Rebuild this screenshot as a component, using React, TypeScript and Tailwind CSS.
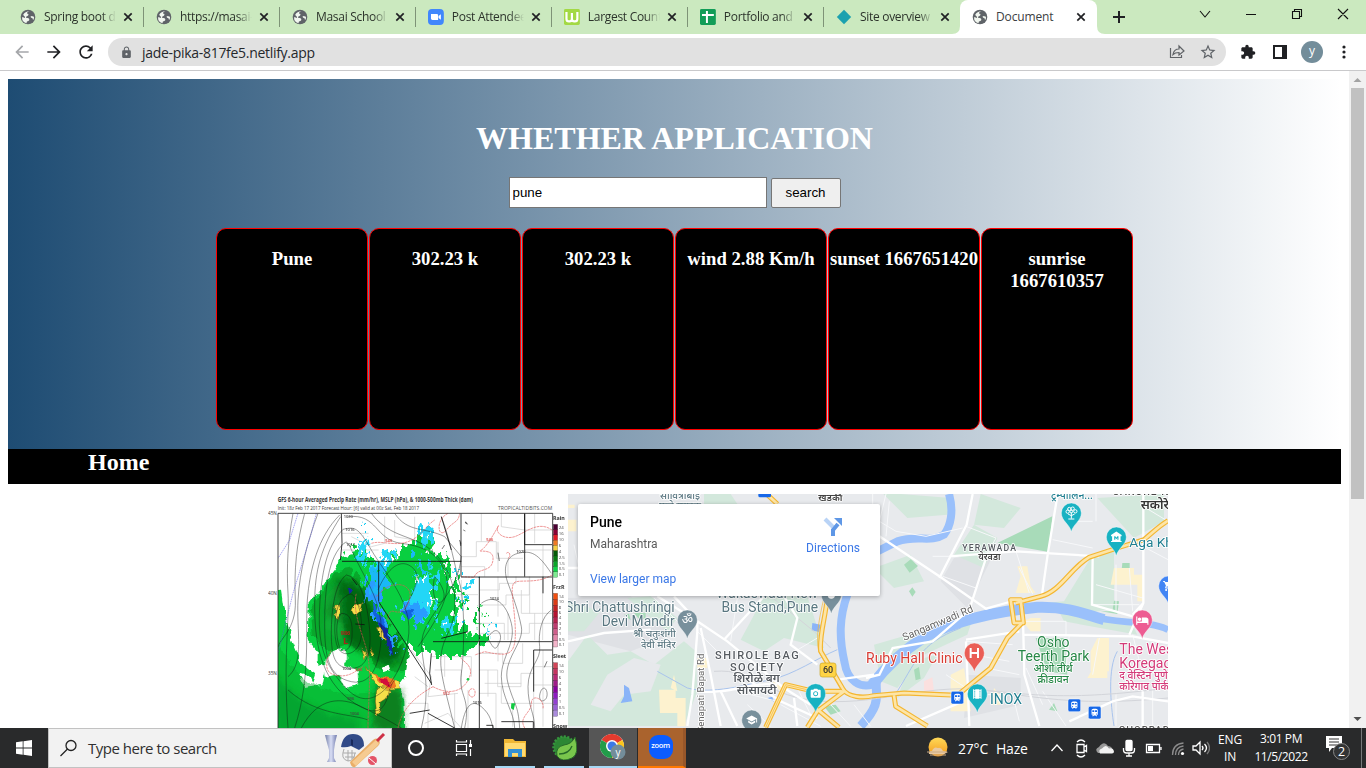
import React from 'react';
import {
  MdLock, MdArrowBack, MdArrowForward, MdRefresh, MdStarBorder, MdExtension,
  MdTrain, MdHotel, MdShoppingCart, MdMuseum, MdSchool, MdNature, MdCameraAlt, MdTheaters,
} from 'react-icons/md';

const Sheet = () => (
  <svg width="16" height="16" viewBox="0 0 16 16"><rect width="16" height="16" rx="1.5" fill="#129d57" /><path d="M6 2h2v3h6v2H8v7H6V7H2V5h4z" fill="#fff" /></svg>
);
const ZoomFav = () => (
  <svg width="16" height="16" viewBox="0 0 16 16"><rect width="16" height="16" rx="4" fill="#4087fc" /><path d="M3 5h6q1.200 0 1.200 1.200V11H4.500Q3 11 3 9.500zM10.700 7 13 5.200v5.500L10.700 9z" fill="#fff" /></svg>
);
const WFav = () => (
  <svg width="16" height="16" viewBox="0 0 16 16"><rect width="16" height="16" rx="1.500" fill="#a3d944" /><path d="M2.500 3v7q0 2.500 2.500 2.500h.5Q8 12.500 8 10V4v6q0 2.500 2.500 2.500h.5q2.500 0 2.500-2.500V3" fill="none" stroke="#fff" strokeWidth="2.200" /></svg>
);
const Diamond = () => (
  <svg width="16" height="16" viewBox="0 0 16 16"><path d="M8 .8 15.200 8 8 15.200.8 8z" fill="#1ba1af" /></svg>
);
const Globe = () => (
  <svg className="shrink-0" width="16" height="16" viewBox="0 0 16 16">
    <circle cx="8" cy="8" r="7.300" fill="#5f6368" />
    <path d="M9.500 2.200Q7 2.800 7 4q0 1 1.500 1 0 2-1.500 2.200-1.200.2-1 1.500 2 0 2.500.6 1.200.4.700 1.900-.5 1-2.200 1.300-.6.800-.3 1.800Q2 13.500 2 8.300q1.500-.2 3 .7Q5.500 7.500 4 7l-.8-1.200Q5 2.200 9.500 2.200M10.500 7.500q1.500-1 2.500 0l1 .3q.2 2-.8 3.200-.7-.8-.8-1.900-1.600.1-1.900-1.600" fill="#f1f6ef" />
  </svg>
);
const Close = () => (
  <svg className="shrink-0" width="10" height="10"><path d="M1.300 1.300l7.400 7.400M8.700 1.300 1.300 8.700" stroke="#202124" strokeWidth="1.700" /></svg>
);

const tabs = [
  { title: 'Spring boot de', icon: <Globe /> },
  { title: 'https://masai-s', icon: <Globe /> },
  { title: 'Masai School', icon: <Globe /> },
  { title: 'Post Attendee', icon: <ZoomFav /> },
  { title: 'Largest Countr', icon: <WFav /> },
  { title: 'Portfolio and a', icon: <Sheet /> },
  { title: 'Site overview', icon: <Diamond /> },
];

function TabStrip() {
  return (
    <div className="flex h-[34px] bg-[#cbe9bf] text-[12px] tracking-[-0.3px] text-[#2c332b]">
      <div className="flex pl-2">
        {tabs.map((t, i) => (
          <div key={i} className="flex w-[136px] items-center pl-3">
            {t.icon}
            <div className="ml-2 w-[73px] overflow-hidden whitespace-nowrap [mask-image:linear-gradient(to_right,black_80%,transparent)]">{t.title}</div>
            <div className="ml-[7px] flex"><Close /></div>
            <div className={i < 6 ? 'ml-[10px] h-5 w-px bg-[#7e9377]' : ''} />
          </div>
        ))}
      </div>
      <div className="relative flex w-[137px] items-center rounded-t-lg bg-white pl-3">
        <svg className="absolute bottom-0 -left-2" width="8" height="8"><path d="M8 0v8H0Q8 8 8 0" fill="#fff" /></svg>
        <svg className="absolute -right-2 bottom-0" width="8" height="8"><path d="M0 0v8h8Q0 8 0 0" fill="#fff" /></svg>
        <Globe />
        <div className="ml-2 w-[73px] tracking-[-0.15px] text-[#3c4043]">Document</div>
        <div className="ml-[7px]"><Close /></div>
      </div>
      <div className="flex w-11 items-center justify-center"><svg width="12" height="12"><path d="M6 0v12M0 6h12" stroke="#202124" strokeWidth="2" /></svg></div>
      <svg className="ml-[40px]" width="185" height="34" fill="none" stroke="#111" strokeWidth="1.100">
        <path d="m19 11 5 6 5-6M65 14.500h10M111.500 11.500h7v7h-7zM113.500 11.500v-2h7v7h-2M157 9l10 10M167 9l-10 10" />
      </svg>
    </div>
  );
}

function Toolbar() {
  return (
    <div className="flex h-[37px] items-center border-b border-[#c9c9cb] bg-white pl-3">
      <MdArrowBack size={20} color="#a5a7aa" />
      <MdArrowForward className="ml-3" size={20} color="#202124" />
      <MdRefresh className="ml-3" size={20} color="#202124" />
      <div className="ml-3 flex h-7 w-[1118px] items-center rounded-full bg-[#e1e1e1] pl-3">
        <MdLock size={13} color="#5f6368" />
        <span className="ml-[9px] text-[14px] tracking-[-0.3px] text-[#25282c]">jade-pika-817fe5.netlify.app</span>
        <svg className="ml-auto" width="18" height="18" fill="none" stroke="#606367" strokeWidth="1.200">
          <path d="M2.500 5v9.500h11V12M5 11.500q1-5.500 6-5.500V3l5 5-5 4V9.500q-4 0-6 2z" />
        </svg>
        <MdStarBorder className="mr-[9px] ml-[13px]" size={18} color="#5f6368" />
      </div>
      <MdExtension className="ml-[14px]" size={16} color="#202124" />
      <svg className="ml-[17px]" width="14" height="14"><path fillRule="evenodd" d="M0 0h14v14H0zM2 2v10h7V2z" fill="#202124" /></svg>
      <div className="ml-[14px] flex size-[22px] items-center justify-center rounded-full bg-[#738d9a] pb-[2px] text-[12px] text-white">y</div>
      <svg className="ml-[19px]" width="4" height="14" fill="#202124"><circle cx="2" cy="2" r="1.600" /><circle cx="2" cy="7" r="1.600" /><circle cx="2" cy="12" r="1.600" /></svg>
    </div>
  );
}

const cards = ['Pune', '302.23 k', '302.23 k', 'wind 2.88 Km/h', 'sunset 1667651420', 'sunrise 1667610357'];

const legends = [
  { y: 103, h: 158, name: 'Rain', ny: 91, colors: ['#4c0033', '#8b0036', '#e21b27', '#ef7a24', '#f4ce40', '#055b08', '#087b12', '#09a629', '#0cd744', '#7dea90'], ticks: ['24', '16', '10', '6', '4', '2.5', '1.5', '0.5', '0.1'] },
  { y: 310, h: 160, name: 'FrzR', ny: 298, colors: ['#f34f0f', '#dc3c16', '#c52222', '#b71230', '#b6204d', '#bf3c70', '#d05e8b', '#e487aa', '#f3b4c9'], ticks: ['14', '10', '8', '6', '4', '3', '2', '1', '0.5', '0.1'] },
  { y: 518, h: 160, name: 'Sleet', ny: 505, colors: ['#d44558', '#c5345f', '#b82975', '#a01e89', '#8900a0', '#8e1bc2', '#9340d2', '#9a60d7', '#aa8bdd'], ticks: ['14', '10', '6', '4', '3', '2', '1', '0.5', '0.1'] },
];

const isobars = [
  'M75 70C60 150 55 230 60 310S45 500 60 714',
  'M110 70C85 160 78 240 82 330S30 450 32 470',
  'M150 70C120 150 95 240 90 330S110 520 60 560',
  'M215 75C150 140 125 240 118 330S130 560 80 714',
  'M218 80C160 170 140 240 140 340S150 570 260 640 350 600 380 570',
  'M225 118C175 170 160 250 155 350S160 520 240 600 400 560 420 450 350 250 310 180 260 110 225 118',
  'M228 160C180 200 170 300 170 400S180 560 250 575 340 500 340 420 300 280 270 220 240 150 228 160',
  'M235 255C200 280 190 360 190 430S200 535 250 535 310 480 305 420 285 265 235 255',
  'M225 325C200 350 195 420 205 460S250 500 270 470 280 360 265 330 240 315 225 325',
  'M220 370C200 390 205 450 215 472S250 480 252 440 250 370 220 370',
  'M240 80C330 70 320 150 400 160S520 200 535 260 500 400 450 470',
  'M310 70C370 150 440 130 500 190S580 350 540 430 520 550 560 714',
  'M380 70C420 130 470 110 530 140L580 200 C570 300 500 350 470 420S500 550 460 714',
  'M520 80C550 160 560 230 575 280S590 480 580 550 610 620 590 714',
  'M100 714C150 620 220 620 280 650S360 690 400 714',
  'M60 600C150 680 250 670 300 690',
  'M640 340C680 310 715 340 730 400S700 500 700 560 740 670 740 714',
  'M850 250C810 190 790 180 750 190S705 240 720 280 750 360 760 410 700 510 720 580 750 640 755 714',
  'M850 360C820 380 810 430 815 470S780 530 780 590 800 670 800 714',
  'M670 430C685 410 705 430 695 455S680 480 668 460 660 440 670 430',
  'M580 714C590 650 610 625 640 650S670 700 675 714',
  'M820 600C835 580 845 620 830 630S810 620 820 600',
  'M330 300C350 250 390 200 430 230S430 310 410 360',
  'M500 260C520 280 540 320 520 335S490 300 500 260',
];

const counties = [
  'M580 200h45v-45h60v50h80M640 70v85M700 70v40l70 10v60h80M770 120h82M690 155v90M580 230h70v30M720 205v55M800 70v90M825 165v95',
  'M634 300h60v-20h50v-20M634 345h80v-30h70v-55M690 260v120M634 400h75v50M760 300v70h92M785 260v110M720 370v80M800 370v80M634 430h150v-30h68M824 260v190',
  'M634 490h70v30h60v-60M634 540h55v50h70v-40h40M634 610h50v104M700 590v50h97M734 640v70M690 454v60M797 480v230M825 480v230M797 530h55M797 585h55M797 640h55M650 580h110M660 540v80',
  'M430 480l60 80-10 60 90-10M490 500h120v60M530 460v100M500 540h80v60M600 600v114M420 640h60v74M470 700l70-30 40 44M560 610v104M440 560l40 30M250 140l60 30 40-10v-80M380 90v50l60 10v-70',
  'M222 130h80M222 180h110M280 214v60l50 20M420 214v70M470 214v60M335 330l160 10M332 275h100l20 60M380 335v60l40 20M540 214v100h90M580 270v80',
];

const redLines = [
  'M310 160C340 150 380 170 420 155S470 110 500 90',
  'M540 70C500 90 510 150 535 120S570 100 575 70',
  'M852 120C810 90 770 130 740 140S680 130 690 110 660 170 640 180 680 170 675 210 630 230 618 262L580 260',
  'M852 255C810 280 770 270 745 275S740 340 742 420 720 500 650 485L620 495',
  'M285 530C260 545 240 565 200 555S180 500 190 480',
  'M495 590C440 620 400 660 390 714M495 590C550 620 590 600 605 560S570 510 580 500M605 600c10-10 20 0 15 15s-25 0-15-15',
  'M300 714C300 640 310 560 300 500S250 370 265 310',
  'M770 714C750 680 790 670 790 640S830 625 825 655M715 190c10-10 15 10 5 15',
  'M325 320C370 260 450 280 420 340S365 330 360 390',
];

function WeatherMap() {
  return (
    <svg className="block h-[234px] w-[300px] shrink-0" viewBox="0 12 900 702" fontFamily="'Open Sans','Noto Sans',sans-serif">
      <defs>
        <filter id="ragged" x="-5%" y="-5%" width="110%" height="110%">
          <feTurbulence type="fractalNoise" baseFrequency=".035" numOctaves="3" seed="4" />
          <feDisplacementMap in="SourceGraphic" scale="30" xChannelSelector="R" yChannelSelector="G" colorInterpolationFilters="sRGB" />
        </filter>
        <filter id="jagged" x="-5%" y="-5%" width="110%" height="110%" colorInterpolationFilters="sRGB">
          <feTurbulence type="fractalNoise" baseFrequency=".05 .03" numOctaves="3" seed="11" />
          <feDisplacementMap in="SourceGraphic" scale="90" xChannelSelector="R" yChannelSelector="G" />
        </filter>
        <filter id="haze"><feGaussianBlur stdDeviation="9" /></filter>
        <clipPath id="plot"><rect x="30" y="70" width="824" height="644" /></clipPath>
      </defs>
      <rect y="12" width="900" height="702" fill="#fff" />
      <text x="29" y="36" fontSize="19" fontWeight="700" fill="#333" textLength="586" lengthAdjust="spacingAndGlyphs">GFS 6-hour Averaged Precip Rate (mm/hr), MSLP (hPa), &amp; 1000-500mb Thick (dam)</text>
      <text x="29" y="59" fontSize="16" fill="#333" textLength="424" lengthAdjust="spacingAndGlyphs">Init: 18z Feb 17 2017   Forecast Hour: [6]   valid at 00z Sat, Feb 18 2017</text>
      <text x="690" y="59" fontSize="18" fill="#555" textLength="163" lengthAdjust="spacingAndGlyphs">TROPICALTIDBITS.COM</text>
      <g fontSize="14" fill="#333"><text x="0" y="75">45N</text><text x="0" y="315">40N</text><text x="0" y="556">35N</text></g>
      <g clipPath="url(#plot)">
        <g fill="none" stroke="#cfcfcf" strokeWidth="2.200">{counties.map((d, i) => <path key={i} d={d} />)}</g>
        <g filter="url(#ragged)">
          <path fill="#09cf40" d="M30 310L48 308 62 400 75 450 110 530 150 560 140 590 105 570 120 600 170 590 180 540 155 520 155 490 125 455 128 350 210 240 225 210 290 195 340 260 440 350 430 440 425 490 420 560 400 590 415 640 418 730 30 730z" />
          <path fill="#09a82c" d="M140 440L135 360 210 250 270 240 310 310 350 350 400 440 430 490 420 550 350 550 300 500 250 470 185 490z" />
          <path fill="#09a82c" d="M30 450q60 150 210 170l160-15 12 125H30z" opacity=".45" />
          <g filter="url(#haze)">
            <path fill="#06600f" d="M215 270L290 295 330 380 400 460 410 520 350 530 290 490 250 470 220 400 180 380z" opacity=".9" />
            <path fill="#09701c" d="M330 590L410 610 410 730 320 730z" opacity=".8" />
            <path fill="#0a8020" d="M30 560q100 130 250 130v60H30z" opacity=".4" />
            <path fill="#19b53c" d="M180 330l40-50 15 110-5 70-50-30z" opacity=".5" />
          </g>
          <path fill="#fff" d="M175 550L180 510 215 480 240 490 240 530 275 545 278 590 240 600 220 560 180 570z" />
        </g>
        <g filter="url(#jagged)">
          <path fill="#09cf40" d="M225 210L290 195 330 225 345 200 430 160 480 130 495 185 530 195 550 245 565 300 575 350 560 380 600 430 645 440 640 475 590 495 520 495 460 480 425 480 380 430 300 300z" />
          <path fill="#23d6f6" d="M460 100l25 5-5 50-28 0zM325 215l45-35 12 30-25 60-20 50-20-45-5-50zM450 260l50-20-5 150-60 20-40-55 35-40zM530 380l40 0-10 50-45 0zM280 140l14 0 5 50-18 30-8-50zM580 275l45-5-35 30z" />
          <path fill="#2a9cff" d="M290 280L350 250 350 310 340 380 370 430 380 480 350 440 320 370zM400 350l60-15 30 50-60 20z" />
          <path fill="#1ab8f5" d="M300 260l40-40 25 10-10 60-35 30zM440 200l35 10 5 35-30 0z" />
          <path fill="#09cf40" d="M350 230l70-30 25 60-35 60-50-10zM420 390l50 20-20 50-35-20zM500 190l40 0 5 60-40 30z" />
          <g fill="#09c93d"><path d="M560 300l20 10-5 30-18-10zM590 320l14 14-10 26-14-15zM610 375l20-10 15 30-15 15zM640 360l12-6-4 20zM245 170l20-10-10 25zM575 410l28 15-15 30-25-15z" /></g>
          <g fill="#fff"><path d="M460 270l8-20 4 20zM490 320l12-10-5 30zM435 290l8-15 2 20zM540 390l12-8-4 26zM580 380l12-12-7 30zM375 190l12-8-4 24zM520 250l7-14 3 20z" /></g>
          <g fill="#0dcaf1"><circle cx="270" cy="190" r="5" /><circle cx="565" cy="240" r="5" /><circle cx="672" cy="405" r="5" /><circle cx="658" cy="435" r="5" /><circle cx="520" cy="225" r="6" /><circle cx="545" cy="275" r="5" /><circle cx="285" cy="110" r="5" /><circle cx="575" cy="330" r="8" /><circle cx="590" cy="350" r="6" /></g>
        </g>
        <g filter="url(#ragged)">
          <path fill="#1262df" d="M405 365l40 5-20 25zM320 340l30 50 30 80-4 35-20-60-30-60z" />
          <path fill="#13269e" d="M335 400l30 25 20 75-18-15-15-50zM250 300l5-4 6 18-8 8z" />
          <path fill="#fff" d="M350 540l16-10 4 20-14 5zM105 560l30 8 10 20-25-4z" />
          <path fill="#f6df49" stroke="#835b18" strokeWidth="1.500" d="M210 355l10-5 4 20-8 24-9-12zM268 350l22-6-4 22-20 18-8-14zM335 418l12 5 12 33-14-12zM288 485l14 18-5 15zM314 482l12 26-12-6zM300 535l18 25 35 15 45 5 5 24-30 2-35-8-24-30zM335 605l30-12 10 20-15 20-15 10 0 25-8 18-6-45z" />
          <path fill="#ef7a24" d="M320 560l65 12 5 28-30 2z" />
          <path fill="#d30e3c" d="M338 568l28 4 10 26-24-3z" />
        </g>
        <g fill="none" stroke="#111" strokeOpacity=".72" strokeWidth="1.700">{isobars.map((d, i) => <path key={i} d={d} />)}</g>
        <g fill="none" stroke="#e45353" strokeWidth="1.800" strokeDasharray="8 2">{redLines.map((d, i) => <path key={i} d={d} />)}</g>
        <g fill="none" stroke="#5656e4" strokeWidth="1.500" strokeDasharray="5 2"><path d="M90 70L65 150 30 205M145 70L130 130 75 310 30 490" /></g>
        <g fill="none" stroke="#111" strokeWidth="2.500"><path d="M220 70l2 90-5 50M222 214h358M332 214v120M579 70v190M332 335L490 580M495 455h358M634 260v454M579 261h273M770 70v190M770 164h82M797 480h56M797 480v125M825 260v50M252 265l15 20M490 490l-5 60 6 35M425 670l60-10M480 670l80 44M655 706h20v8M700 695h96v19M520 80l30 100M262 402l28 2M770 70v94M520 445l80-20" /></g>
        <g fill="#222" stroke="#222"><path d="M575 150l3 18 1-8zM593 95l6 8-7-4zM586 120l6 3zM690 188l4 25zM530 165l-8 12zM837 514l-8 18z" /></g>
        <path d="M730 640l12 0-5 20-8-5z" fill="#12ca42" /><circle cx="600" cy="568" r="4" fill="#12ca42" />
        <g fontSize="12" fontWeight="600" fill="#444"><text x="227" y="84">1020</text><text x="232" y="122">1016</text><text x="234" y="167">1012</text><text x="222" y="540">1004</text><text x="238" y="629">996</text><text x="245" y="674">1004</text><text x="665" y="329">1024</text><text x="745" y="189">1028</text><text x="614" y="641">1016</text></g>
        <g fontSize="12" fontWeight="600" fill="#d63d3d"><text x="352" y="157">540</text><text x="655" y="154">546</text><text x="525" y="615">552</text><text x="262" y="543">546</text></g>
        <g fill="#ad2218" fontWeight="700"><text x="218" y="434" fontSize="17">986</text><text x="225" y="462" fontSize="28">L</text></g>
      </g>
      <path d="M30 714V70h824v644" fill="none" stroke="#222" strokeWidth="2.500" />
      {legends.map((l) => (
        <g key={l.name}>
          <text x="855" y={l.ny} fontSize="16" fontWeight="700" fill="#333">{l.name}</text>
          {l.colors.map((c, i) => <rect key={c} x="856" y={l.y + (i * l.h) / l.colors.length} width="13" height={l.h / l.colors.length + 1} fill={c} stroke="#222" strokeWidth=".7" />)}
          {l.ticks.map((t, i) => <text key={t} x="872" y={l.y + 14 + (i * (l.h - 16)) / (l.ticks.length - 1)} fontSize="13" fill="#444">{t}</text>)}
        </g>
      ))}
      <text x="855" y="714" fontSize="16" fontWeight="700" fill="#333">Snow</text>
    </svg>
  );
}

const Pin = ({ x, y, fill, children }: { x: number; y: number; fill: string; children?: React.ReactNode }) => (
  <g transform={`translate(${x} ${y})`}>
    <path d="M0 57C-4 34-30 24-30 0A30 30 0 0 1 30 0C30 24 4 34 0 57z" fill={fill} stroke="#fff" strokeOpacity=".6" strokeWidth="2" />
    {children}
  </g>
);

const Train = ({ x, y }: { x: number; y: number }) => (
  <g transform={`translate(${x} ${y})`}><rect x="-19" y="-19" width="38" height="38" rx="5" fill="#1768e8" stroke="#fff" strokeWidth="1.500" /><MdTrain x={-14} y={-14} size={28} color="#fff" /></g>
);

const minorRoads = [
  'M12 240H45M12 460L120 435 260 425M280 325L400 400 490 460 660 600 740 650M330 325L400 400V430L385 620 370 714M480 455L600 325M410 420L440 560 470 714M400 610C500 620 560 580 640 590',
  'M530 560L650 640 760 690M660 325L700 390 680 470 760 530M820 575L930 560M690 630L700 714M470 610L520 714',
];
const eastRoads = [
  'M320 18L302 110 220 270M40 145L220 265 360 362 430 342M365 195L310 365 200 460 80 480 40 560 0 570M250 205L450 190 700 205M575 18L545 200 528 320M680 210L678 350 800 385',
  'M832 18V345L790 440M470 350L475 560 520 714M470 440L800 445 906 465M120 714L290 640M300 460L310 714M300 455L460 430M830 610V714M610 700L740 640 800 625 906 640M800 380L832 345',
];
const alleys = [
  'M12 60H40M12 110H40M20 18V60M60 18L40 100M40 100L90 130 180 145 290 120M70 40L60 145M300 115L390 150 365 195M230 265L330 300M250 205H200M450 190L490 315M460 240L500 318M560 155L680 180M600 100L680 100M690 18V100M690 290L830 330M750 230V370M790 240L800 370M680 350H820M840 60L906 100M840 180L906 215',
  'M300 460L440 470M320 500L430 520M360 540L460 560M480 400H600V445M610 440L600 540M700 450L680 560M800 440L820 520M240 560L300 600M340 620L440 620 460 700M480 540L530 650M530 610L600 714M860 600V714M750 620V714',
];

function CityMap() {
  return (
    <svg className="block h-[234px] w-[600px]" viewBox="12 18 1800 702" fontFamily="Roboto,'Noto Sans',FreeSans,sans-serif">
      <rect x="12" y="18" width="1800" height="702" fill="#e8eaed" />
      <g fill="#dfe1e5"><path d="M12 330L200 325 330 440 200 490 12 440zM1170 210L1290 195 1210 360 1130 280zM1210 560L1370 570 1370 650 1200 690z" /></g>
      <g fill="#d3e8dc">
        <path d="M12 520L70 440 130 500 200 490 270 530 360 460 395 490 400 610 360 714H12zM12 340L110 370 60 430 12 430zM530 455L560 400 600 325H730L780 480 660 450 600 490zM420 18H500L520 48H420zM190 330L260 325 340 390 310 430z" />
        <path d="M958 18L1030 90 1150 80 1160 30 1010 18zM1250 18L1370 60 1320 120 1230 110zM930 240L1040 200 1080 280 990 300zM930 470L1070 430 1230 380 1210 440 1080 500 1000 600 950 580zM1040 520L1120 500 1080 570 1000 630zM1380 350L1500 340 1580 210 1650 180V360L1550 380zM1230 110L1300 150 1260 240 1170 200zM1800 18V100L1710 150 1600 30zM1480 360L1700 400 1720 440 1500 400z" />
      </g>
      <path d="M130 560l80-50 80 20-30 80-80 10-40 50-60-20z" fill="#e7e9ec" />
      <g fill="#a8dbb9"><path d="M1300 165L1465 85 1455 192zM1415 450H1500L1510 560 1450 550zM1020 230l20-16 22 20-25 20zM1035 310l10-12 10 14-10 14zM1610 370l50 8 5-38-15-2-5 32zM1675 225h22v30h-25zM1455 665l15-20 10 25zM210 375h35v18h-20zM180 380l15-3 5 20zM780 655l35-5 15 20-30 10zM1050 545l15-8 5 35-15 5z" /></g>
      <g fill="#fdf2cf"><path d="M285 605h50v25h30v85h-25v-40h-52zM12 95h25v35H12zM12 50h20v10H12zM400 510h30v30h-30zM1360 235h30l10 60 15 20h-60l15-50zM1400 390h30v40h-30zM1600 450h35v100h-55v-60zM1650 240h60v20h30v80h-20v-50h-80zM1160 560l40-20 20 130h-60zM1600 520h30v50h-60zM1375 400l25-10v40zM320 600l10-40 10 50zM625 580l50 20-20 20zM1290 600l18 20v30h-25z" /></g>
      <path fill="#fbe0df" d="M1080 580l25-12 5 45-30 8z" />
      <g fill="none" stroke="#9ac0fb" strokeWidth="24">
        <path d="M1155 18C1170 70 1160 115 1140 140 1100 165 1060 140 1000 160L940 190 M850 320C825 390 825 450 842 525 850 580 890 600 925 590" />
        <path strokeWidth="33" d="M925 590C970 530 1030 480 1080 448 1170 400 1280 372 1420 358 1520 355 1570 382 1620 395" />
        <path strokeWidth="20" d="M1590 386C1650 408 1750 395 1812 425" />
        <path strokeWidth="27" d="M938 570C930 620 960 640 890 714" />
      </g>
      <g fill="none" stroke="#a9c4ed" strokeWidth="3"><path d="M280 550L370 600C440 620 550 590 620 575S760 510 820 485M1660 490C1630 540 1640 650 1650 714M990 625C1060 520 1060 470 1190 420" /></g>
      <path fill="#8ab4f8" d="M180 590l15 10 10 40-35 5 10-20zM745 405l25 5-5 22-22-5zM610 630l15-4 5 15z" />
      <g fill="none" stroke="#f7f8fa" strokeWidth="3">
        <path d="M30 170l15 70M270 330l80 80M400 430l80 80M520 330l-20 130M520 610l140 35M650 650l120 65M700 600l50 100M800 650l60 65M660 510l100-60M550 650l70 65M870 650l50 65" />
        <g transform="translate(906 0)">{alleys.map((d) => <path key={d} d={d} />)}</g>
      </g>
      <g fill="none" stroke="#d3d5da" strokeWidth="3"><path d="M620 325L750 430 800 480M450 550C580 540 600 630 780 640S1100 580 1290 610 1600 650 1812 630M1200 600C1400 620 1500 640 1812 600" /></g>
      <g fill="none" stroke="#fff" strokeWidth="7">{minorRoads.map((d) => <path key={d} d={d} />)}<g transform="translate(906 0)">{eastRoads.map((d) => <path key={d} d={d} />)}</g></g>
      {[{ c: '#f4b630', w: 15 }, { c: '#fde5a7', w: 8 }].map((r) => (
        <g key={r.c} fill="none" stroke={r.c} strokeWidth={r.w} strokeLinejoin="round">
          <path d="M610 20L640 48M790 325C785 390 765 440 770 490L835 600 C850 630 900 630 930 623L1020 615 1180 622 1280 540 1330 450 1372 407M605 718L665 590 750 610 840 610M840 610L760 670 730 718M755 660L825 718M990 622L995 655 1090 714" />
          <path d="M1340 335H1370L1378 405H1350zM1355 345L1430 325C1490 310 1520 240 1575 208L1660 180 1740 155 C1770 130 1790 110 1812 98" />
        </g>
      ))}
      <g fill="none" stroke="#f4b630" strokeWidth="2"><path d="M780 330C765 390 755 450 764 490L834 607M605 718L665 590 750 610" /></g>
      <rect x="768" y="525" width="48" height="42" rx="7" fill="#ffd445" stroke="#c7a323" strokeWidth="2" /><text x="792" y="556" fontSize="27" fontWeight="500" fill="#333" textAnchor="middle">60</text>
      <rect x="583" y="-10" width="38" height="38" rx="5" fill="#1768e8" />

      <g className="[paint-order:stroke]" stroke="#fff" strokeWidth="5" strokeLinejoin="round">
        <g fontSize="41.500" fill="#597680" textAnchor="end"><text x="332" y="371">Shri Chattushringi</text><text x="332" y="413">Devi Mandir</text><text x="335" y="447" fontSize="30" fontWeight="500">श्री चतुःशंगी</text><text x="335" y="480" fontSize="30" fontWeight="500">देवी मंदिर</text><text x="762" y="330">Wakdewadi New</text><text x="762" y="372">Bus Stand,Pune</text></g>
        <g fontSize="33" fontWeight="500" fill="#555a60" textAnchor="middle" letterSpacing="4.500"><text x="581" y="512">SHIROLE BAG</text><text x="580" y="548">SOCIETY</text><text x="578" y="583" fontSize="35" fontWeight="600" letterSpacing="0">शिरोळे बग</text><text x="578" y="619" fontSize="35" fontWeight="600" letterSpacing="0">सोसायटी</text></g>
        <text transform="translate(420 497) rotate(-90)" fontSize="29" fill="#666" textAnchor="end">Senapati Bapat Rd</text>
        <text x="348" y="32" fontSize="30" fontWeight="500" fill="#597680" textAnchor="middle">सावित्रीबाई</text><text x="348" y="62" fontSize="30" fontWeight="500" fill="#597680" textAnchor="middle">फुले स्मारक</text>
        <text x="799" y="38" fontSize="29" fontWeight="600" fill="#444" textAnchor="middle">खडकी</text>
        <g transform="translate(906 0)">
          <text x="371" y="189" fontSize="26" fontWeight="500" letterSpacing="3.500" fill="#555a60" textAnchor="middle">YERAWADA</text><text x="370" y="215" fontSize="27" fontWeight="600" fill="#444" textAnchor="middle">येरवडा</text>
          <text transform="translate(115 459) rotate(-23)" fontSize="31.500" fill="#666">Sangamwadi Rd</text>
          <text x="0" y="524" fontSize="42" fill="#d83c34">Ruby Hall Clinic</text>
          <g fontSize="42" fill="#278747" textAnchor="middle"><text x="562" y="477">Osho</text><text x="563" y="519">Teerth Park</text><text x="561" y="552" fontSize="31" fontWeight="500">ओशो तीर्थ</text><text x="561" y="585" fontSize="31" fontWeight="500">क्रीडावन</text></g>
          <text x="372" y="648" fontSize="42" fill="#217f91">INOX</text>
          <text x="790" y="177" fontSize="41" fill="#217f91">Aga Khan Palace</text>
          <g fontSize="42" fill="#d43b79"><text x="760" y="498">The Westin Pune</text><text x="760" y="540">Koregaon Park</text><text x="760" y="574" fontSize="31" fontWeight="500">द वेस्टिन पुणे</text><text x="760" y="606" fontSize="31" fontWeight="500">कोरेगाव पार्क</text></g>
          <text x="555" y="33" fontSize="31" fontWeight="500" fill="#217f91">ट्रम्पोलिन...</text>
          <text x="740" y="22" fontSize="31" fontWeight="500" fill="#444" letterSpacing="3">SAKORE NAGAR</text><text x="824" y="62" fontSize="38" fontWeight="600" fill="#333">सकोरे</text>
          <text x="758" y="735" fontSize="29" fontWeight="500" letterSpacing="3" fill="#555">GHORPADI</text>
        </g>
      </g>
      <Pin x={370} y={396} fill="#78909c"><text textAnchor="middle" y="13" fontSize="37" fill="#fff">ॐ</text></Pin>
      <Pin x={802} y={321} fill="#78909c"><circle r="11" fill="#fff" /></Pin>
      <Pin x={563} y={696} fill="#78909c"><MdSchool x={-18} y={-18} size={36} color="#fff" /></Pin>
      <Pin x={755} y={617} fill="#18b2c2"><MdCameraAlt x={-18} y={-18} size={36} color="#fff" /></Pin>
      <g transform="translate(906 0)">
        <Pin x={616} y={75} fill="#18b2c2">
          <g fill="none" stroke="#fff" strokeWidth="3"><circle cx="-11" cy="-4" r="5" /><circle cx="-6" cy="-12" r="5" /><circle cx="4" cy="-13" r="5" /><circle cx="12" cy="-5" r="5" /><circle cx="0" cy="-4" r="4" /><path d="M0-2V17M-10 3 0 8l10-5M-9 18H9" /></g>
        </Pin>
        <Pin x={751} y={147} fill="#18b2c2"><MdMuseum x={-19} y={-20} size={38} color="#fff" /></Pin>
        <Pin x={908} y={294} fill="#4285f4"><MdShoppingCart x={-18} y={-18} size={36} color="#fff" /></Pin>
        <Pin x={829} y={396} fill="#ed5c92"><MdHotel x={-20} y={-19} size={40} color="#fff" /></Pin>
        <Pin x={325} y={495} fill="#ea5e56"><path d="M-11-15v30M11-15v30M-11 0h22" stroke="#fff" strokeWidth="6" /></Pin>
        <Pin x={334} y={618} fill="#18b2c2"><MdTheaters x={-19} y={-19} size={38} color="#fff" /></Pin>
        <Train x={274} y={629} /><Train x={625} y={652} /><Train x={686} y={674} />
      </g>
    </svg>
  );
}

function WebPage() {
  return (
    <div className="flex h-[657px] bg-white">
      <div className="w-[1349px] overflow-hidden px-2 pt-2 font-['Liberation_Serif',serif]">
        <div className="flex h-[370px] flex-col items-center bg-[linear-gradient(to_right,#1e4c73,#ffffff)] pt-[41px]">
          <h1 className="text-[32px] leading-[37px] font-bold text-white">WHETHER APPLICATION</h1>
          <div className="mt-5 flex items-center gap-1 font-['Liberation_Sans',sans-serif] text-[13.33px]">
            <input className="h-[31px] w-[258px] border border-[#767676] bg-white px-[3px] text-black" defaultValue="pune" />
            <button className="h-[30px] w-[70px] rounded-[2px] border border-[#767676] bg-[#efefef] text-black">search</button>
          </div>
          <div className="mt-5 flex gap-px">
            {cards.map((c, i) => (
              <div key={i} className="h-[202px] w-[152px] rounded-[10px] border border-[red] bg-black pt-[19px] text-center text-[18.72px] leading-[22px] font-bold text-white">{c}</div>
            ))}
          </div>
        </div>
        <div className="h-[35px] bg-black pl-20 text-[24px] leading-[27px] font-bold text-white">Home</div>
        <div className="mt-[10px] flex pl-[260px]">
          <WeatherMap />
          <div className="relative">
            <CityMap />
            <div className="absolute top-[10px] left-[10px] flex h-[92px] w-[302px] justify-between rounded-[2px] bg-white pr-5 pl-3 font-[Roboto,sans-serif] text-[12px] shadow-[0_1px_4px_rgba(0,0,0,0.3)]">
              <div>
                <div className="mt-[9px] text-[14px] leading-[18px] font-medium text-black">Pune</div>
                <div className="mt-[6px] leading-[14px] text-[#5b5b5b]">Maharashtra</div>
                <div className="mt-[21px] leading-[14px] text-[#3b78e7]">View larger map</div>
              </div>
              <div className="flex flex-col items-center pt-[13px] text-[#3b78e7]">
                <svg width="20" height="20" viewBox="0 0 20 20" fill="none" strokeWidth="4"><path d="M2 2l8 8" stroke="#b9d3f6" /><path d="M10 19v-6l5-6" stroke="#5e97e6" /><path d="M11 1h8v8z" fill="#5e97e6" /></svg>
                <span className="mt-1 leading-[14px]">Directions</span>
              </div>
            </div>
          </div>
        </div>
      </div>
      <div className="flex w-[17px] flex-col items-center bg-[#f1f1f1]">
        <svg width="17" height="17"><path d="M4.500 11h8l-4-4z" fill="#a3a3a3" /></svg>
        <div className="h-[411px] w-[13px] bg-[#c1c1c1]" />
        <svg className="mt-auto" width="17" height="17"><path d="M4.500 6h8l-4 4z" fill="#505050" /></svg>
      </div>
    </div>
  );
}

function Cricket() {
  return (
    <svg width="62" height="36" viewBox="325 12 62 36">
      <defs><linearGradient id="cup"><stop stopColor="#747fa8" /><stop offset=".5" stopColor="#d9def5" /><stop offset="1" stopColor="#707aac" /></linearGradient></defs>
      <path d="M326 15h12l-2 8-1 7 0 8 2 4h-9l2-4 0-8-2-7z" fill="url(#cup)" />
      <path d="M345 29q-4 10 4 12 6 0 7-8M344 33h13M346 37h10M349 30v11M353 30v9" fill="none" stroke="#aaa" />
      <path d="M342 27q2-13 12-13 11 0 11 12l-5 4-8-4q-5 2-10 1z" fill="#314a87" /><path d="M352 19l2 1v6l-2-1z" fill="#192a5b" />
      <path d="M351 42l23-22q3-3 6 0 2 3-1 6l-23 21q-4 1-5-5z" fill="#eaae68" /><path d="M353 42l24-22 3 4-23 22z" fill="#f6cb91" />
      <path d="M378 21l7-7" stroke="#ce3046" strokeWidth="3" /><circle cx="373.500" cy="40.500" r="4.500" fill="#e45468" /><path d="M370 38l7 6" stroke="#fff" />
    </svg>
  );
}

function Taskbar() {
  return (
    <div className="flex h-10 items-stretch bg-[#292a2b] text-white">
      <div className="flex w-12 items-center justify-center"><svg width="16" height="16" fill="#fff"><path d="M0 2.300 6.700 1.300v6.300H0zM7.500 1.200 16 0v7.600H7.500zM0 8.400h6.700v6.300L0 13.700zM7.500 8.400H16V16l-8.500-1.200z" /></svg></div>
      <div className="flex w-[344px] items-center border border-[#c2c2c2] bg-[#f2f2f2] pl-[11px] text-[#303030]">
        <svg width="18" height="18" fill="none" stroke="#222" strokeWidth="1.300"><circle cx="11" cy="6.500" r="5" /><path d="m7.500 10-7 7" /></svg>
        <span className="ml-[10px] text-[15px] tracking-[-0.49px]">Type here to search</span>
        <div className="mt-1 mr-[5px] ml-auto"><Cricket /></div>
      </div>
      <div className="flex w-12 items-center justify-center"><div className="size-4 rounded-full border-2 border-white" /></div>
      <div className="flex w-12 items-center justify-center"><svg width="18" height="18" fill="none" stroke="#fff" strokeWidth="1.200"><path d="M1.500 5.500h10v7h-10zM1.500 1v2h10V1M1.500 17v-2h10v2M15.500 1v4M15.500 10v7" /><path d="M14 5h3v3h-3z" fill="#fff" stroke="none" /></svg></div>
      <div className="ml-[7px] flex w-10 items-center justify-center border-b-2 border-[#a6d8f5] pt-[2px]"><svg width="22" height="18"><path d="M0 0h9l2 2h11v16H0z" fill="#efb735" /><path d="M1 4h20v13H1z" fill="#ffda70" /><path d="M4 10h14v8h-4v-4H8v4H4z" fill="#3490d3" /></svg></div>
      <div className="ml-[9px] flex w-10 items-center justify-center border-b-2 border-[#a6d8f5]"><svg width="25" height="25" viewBox="0 0 25 25"><circle cx="12" cy="12" r="10.500" fill="#2d8734" stroke="#36963d" strokeWidth="2.500" strokeDasharray="2 1.500" /><path d="M23 2q5 17-3 21-10 5-15-2-2-9 7-11 8-1 11-8" fill="#79c64c" stroke="#276b29" /><path d="M7 19q10 0 13-8" stroke="#276b29" fill="none" strokeWidth="1.300" /></svg></div>
      <div className="ml-[5px] flex w-12 items-center justify-center border-b-2 border-[#a6d8f5] bg-[#565656]"><svg width="26" height="26" viewBox="0 0 26 26"><circle cx="12" cy="12" r="12" fill="#fff" /><path d="M12 12L1.600 6A12 12 0 0 1 22.400 6z" fill="#e33b2e" /><path d="M12 12L1.600 6A12 12 0 0 0 12 24z" fill="#229c4a" /><path d="M12 12L12 24A12 12 0 0 0 22.400 6z" fill="#fbc51d" /><circle cx="12" cy="12" r="6" fill="#fff" /><circle cx="12" cy="12" r="4.500" fill="#3b79e7" /><circle cx="18" cy="18" r="7.500" fill="#738d9a" /><text x="18" y="21.500" fill="#fff" fontSize="10" textAnchor="middle">y</text></svg></div>
      <div className="ml-px flex w-12 items-center justify-center border-r-[3px] border-b-2 border-r-[#98572a] border-b-[#ff7800] bg-[#aa632d]"><div className="flex size-6 items-center justify-center rounded-[9px] bg-[#0b5cff] pb-[2px] text-[7.500px] font-semibold tracking-[-0.3px]">zoom</div></div>
      <div className="ml-auto flex items-center text-[14px] tracking-[-0.2px]">
        <svg width="23" height="22"><defs><linearGradient id="sun" x2="0" y2="1"><stop stopColor="#ffd957" /><stop offset="1" stopColor="#f4991d" /></linearGradient></defs><circle cx="11" cy="10" r="9.500" fill="url(#sun)" /><path d="M2 17q-1-3 3-3 2-5 6-3 3-1 5 3l5 1-4 2H2z" fill="#e9c9a0" /><path d="M0 15h20M3 18h16" stroke="#c9aa85" /></svg>
        <span className="ml-[8px] w-[38px]">27°C</span><span className="w-[54px]">Haze</span>
        <svg width="160" height="30" viewBox="1050 733 160 30" fill="none" stroke="#fff" strokeWidth="1.300">
          <path d="m1051.500 751 5.500-6 5.500 6M1077 744.500h7v8h-7zM1084 747l2.500-1.500v6L1084 750M1077 742q4-4 8 0M1077 755q4 4 8 0" />
          <path d="M1098 753q-4-4 1-6 5-7 9-1 5 0 5 7z" fill="#999" stroke="none" /><path d="M1100 753.500q-2-4 2-5 4-5 7 0 4-1 5 3 0 2-2 2z" fill="#f2f2f2" stroke="none" />
          <rect x="1126" y="740.500" width="6" height="10" rx="1" fill="#fff" /><path d="M1123.500 748v2q0 3 3 3h5q3 0 3-3v-2M1129 753v3M1126 756h6" />
          <path d="M1146.500 744.500h13v8h-13zM1161 747v3" /><path d="M1148 746h5v5h-5z" fill="#fff" stroke="none" />
          <path d="M1172.500 755q0-11 11-12M1175.500 755q0-8 8-9M1178.500 755q0-5 5-6" stroke="#8c8c8c" /><circle cx="1182.500" cy="753.500" r="1.600" fill="#fff" stroke="none" />
          <path d="M1193 746h3l4-4v12l-4-4h-3zM1202 746q2 2 0 4M1204.500 744q4 4 0 8" /><path d="M1207 742q5 6 0 12" stroke="#777" />
        </svg>
        <div className="ml-[4px] w-8 text-center text-[12px] leading-[17px]">ENG<br />IN</div>
        <div className="ml-[3px] w-[64px] text-center text-[12px] leading-[18px] tracking-[-0.4px] whitespace-nowrap">3:01 PM<br />11/5/2022</div>
        <svg className="mr-[4px] ml-[10px]" width="34" height="28" viewBox="0 0 34 28"><path d="M3 2h16v12H9l-3 4v-4H3z" fill="#fff" /><path d="M6 5h10M6 8h10M6 11h8" stroke="#333" /><circle cx="18.500" cy="17.500" r="8" fill="#333435" stroke="#888" /><text x="18.500" y="22" fontSize="12.500" fill="#fff" textAnchor="middle">2</text></svg>
        <div className="mr-1 h-10 w-px bg-[#77797a]" />
      </div>
    </div>
  );
}

export default function App() {
  return (
    <div className="h-[768px] w-[1366px] overflow-hidden bg-white font-['Open_Sans','Noto_Sans',sans-serif]">
      <TabStrip />
      <Toolbar />
      <WebPage />
      <Taskbar />
    </div>
  );
}
